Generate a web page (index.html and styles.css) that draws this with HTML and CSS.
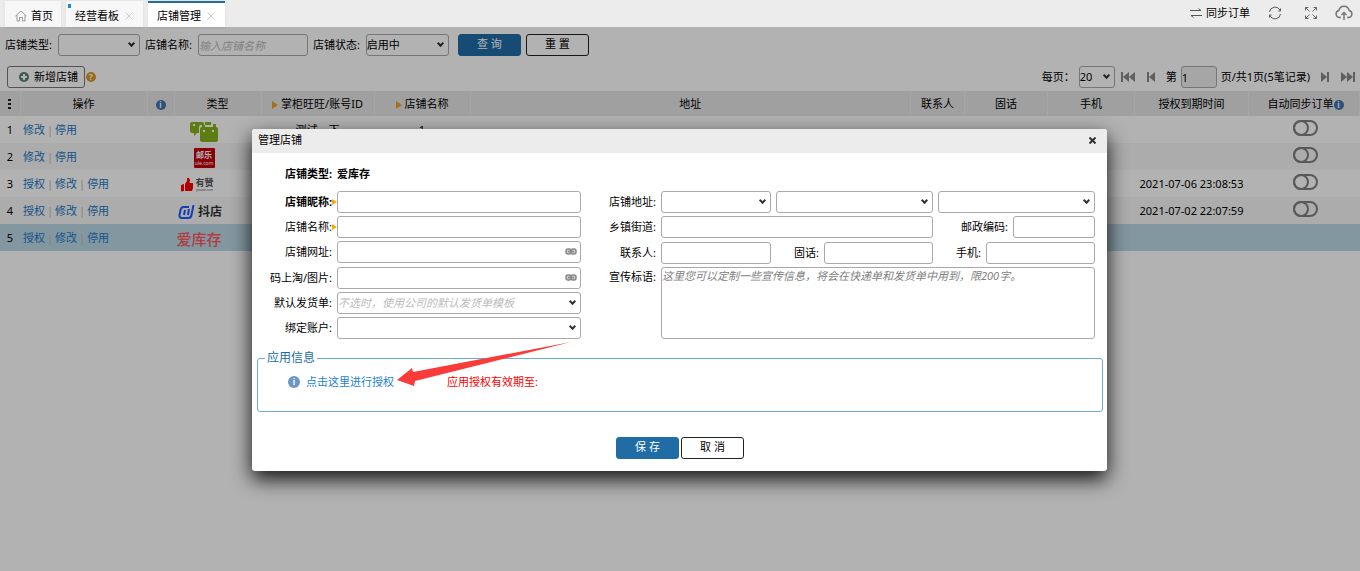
FILE: index.html
```html
<!DOCTYPE html>
<html lang="zh-CN">
<head>
<meta charset="utf-8">
<title>店铺管理</title>
<link rel="stylesheet" href="styles.css">
</head>
<body>
<header class="topbar">
  <nav class="tabs">
    <a class="tab" href="#home"><svg width="12" height="12" viewBox="0 0 12 12" fill="none" stroke="#999"><path d="M.5 6 6 1l5.500 5M2 5v6h2.500V7.500h3V11H10V5"/></svg><span>首页</span></a>
    <a class="tab tab-marked" href="#board"><span>经营看板</span><svg width="8" height="8" viewBox="0 0 8 8" stroke="#ccc"><path d="m.5.5 7 7m0-7-7 7"/></svg></a>
    <a class="tab tab-active" href="#shops"><span>店铺管理</span><svg width="8" height="8" viewBox="0 0 8 8" stroke="#ccc"><path d="m.5.5 7 7m0-7-7 7"/></svg></a>
  </nav>
  <div class="tools">
    <button class="tool" type="button"><svg width="12" height="10" viewBox="0 0 12 10" fill="none" stroke="#555"><path d="M0 2.500h11M8.500.5l2.500 2M12 7.500H1M3.500 9.500 1 7.500"/></svg><span>同步订单</span></button>
    <button class="tool" type="button" aria-label="刷新"><svg width="14" height="14" viewBox="0 0 14 14" fill="none" stroke="#555"><path d="M1.500 6A5.500 5.500 0 0 1 12 4.500M12.500 8A5.500 5.500 0 0 1 2 9.500M12.500 2.500v2.500h-2M1.500 11.500V9h2"/></svg></button>
    <button class="tool" type="button" aria-label="全屏"><svg width="12" height="12" viewBox="0 0 12 12" fill="none" stroke="#666"><path d="M.5 3.500v-3h3M.5.5 4.500 4.500M8.500.5h3v3M11.500.5l-4 4M.5 8.500v3h3M.5 11.500l4-4M8.500 11.500h3v-3M11.500 11.500l-4-4"/></svg></button>
    <button class="tool" type="button" aria-label="上传"><svg width="18" height="16" viewBox="0 0 18 16" fill="none" stroke="#777" stroke-width="1.500"><path d="M6 12.500H4.500a3.600 3.600 0 0 1-.6-7.100 5.200 5.200 0 0 1 10.200 0 3.600 3.600 0 0 1-.6 7.100H12M9 15V8M6.500 10 9 7.500 11.500 10"/></svg></button>
  </div>
</header>

<main class="page">
  <form class="search">
    <label for="s-type">店铺类型:</label>
    <span class="combo combo-type"><select id="s-type"><option></option></select></span>
    <label for="s-name">店铺名称:</label>
    <input class="field search-name" id="s-name" placeholder="输入店铺名称">
    <label for="s-state">店铺状态:</label>
    <span class="combo combo-state"><select id="s-state"><option>启用中</option></select></span>
    <div class="search-actions">
      <button class="btn btn-primary" type="button">查 询</button>
      <button class="btn" type="button">重 置</button>
    </div>
  </form>

  <div class="toolbar">
    <div class="toolbar-left">
      <button class="add" type="button"><svg width="10" height="10" viewBox="0 0 10 10"><circle cx="5" cy="5" r="5" fill="#558570"/><path d="M5 2v6M2 5h6" stroke="#fff" stroke-width="2"/></svg>新增店铺</button>
      <span class="dot dot-help">?</span>
    </div>
    <div class="pager">
      <label class="pager-size" for="p-size">每页：</label>
      <span class="combo combo-size"><select id="p-size"><option>20</option></select></span>
      <button class="pg" type="button" aria-label="首页"><svg width="14" height="12" viewBox="0 0 14 12"><path d="M0 1h2v10H0zM8 1v10L2 6zM14 1v10L8 6z"/></svg></button>
      <button class="pg pg-prev" type="button" aria-label="上一页"><svg width="8" height="12" viewBox="0 0 8 12"><path d="M0 1h2v10H0zM8 1v10L2 6z"/></svg></button>
      <label for="p-no">第</label>
      <input class="field page-no" id="p-no" value="1">
      <span>页/共1页(5笔记录)</span>
      <button class="pg pg-next" type="button" aria-label="下一页"><svg width="8" height="12" viewBox="0 0 8 12"><path d="M6 1h2v10H6zM0 1v10l6-5z"/></svg></button>
      <button class="pg pg-last" type="button" aria-label="末页"><svg width="14" height="12" viewBox="0 0 14 12"><path d="M12 1h2v10h-2zM0 1v10l6-5zM6 1v10l6-5z"/></svg></button>
    </div>
  </div>

  <table class="grid">
    <colgroup><col class="c-no"><col class="c-op"><col class="c-info"><col class="c-kind"><col class="c-id"><col class="c-name"><col><col class="c-person"><col class="c-tel"><col class="c-mobile"><col class="c-date"><col class="c-sync"></colgroup>
    <thead>
      <tr>
        <th><svg width="3" height="10" viewBox="0 0 3 10" fill="#222"><path d="M0 0h3v2H0zM0 4h3v2H0zM0 8h3v2H0z"/></svg></th>
        <th>操作</th>
        <th><span class="dot dot-info">i</span></th>
        <th>类型</th>
        <th><span class="mark"></span>掌柜旺旺/账号ID</th>
        <th><span class="mark"></span>店铺名称</th>
        <th>地址</th><th>联系人</th><th>固话</th><th>手机</th><th>授权到期时间</th>
        <th class="sync">自动同步订单<span class="dot dot-info">i</span></th>
      </tr>
    </thead>
    <tbody>
      <tr>
        <td>1</td><td class="ops"><a href="#edit">修改</a><i>|</i><a href="#stop">停用</a></td><td></td>
        <td><span class="logo"><svg width="28" height="21" viewBox="0 0 28 21"><path fill="#86b41c" d="M2 1h10q2 0 2 2v1h-3q-2 0-2 2v6H7l-3 3v-3H2q-2 0-2-2V3q0-2 2-2zM15 1h6v3h-6z"/><rect x="10" y="6" width="18" height="15" rx="2" fill="#86b41c"/><path d="M12 6V4h3v2M23 6V3h3v3" fill="#86b41c"/><path d="M4 3v2M14 9v2M23 9v2" stroke="#fff" stroke-width="2"/></svg></span></td>
        <td>测试一下</td><td>1</td><td></td><td></td><td></td><td></td><td></td>
        <td class="sync"><input class="switch" type="checkbox" aria-label="自动同步订单 1"></td>
      </tr>
      <tr>
        <td>2</td><td class="ops"><a href="#edit">修改</a><i>|</i><a href="#stop">停用</a></td><td></td>
        <td><span class="logo"><span class="logo-ule"><b>邮乐</b><small>ule.com</small></span></span></td>
        <td></td><td></td><td></td><td></td><td></td><td></td><td></td>
        <td class="sync"><input class="switch" type="checkbox" aria-label="自动同步订单 2"></td>
      </tr>
      <tr>
        <td>3</td><td class="ops"><a href="#auth">授权</a><i>|</i><a href="#edit">修改</a><i>|</i><a href="#stop">停用</a></td><td></td>
        <td><span class="logo logo-youzan"><svg width="12" height="14" viewBox="0 0 12 14" fill="#f00"><path d="M0 7l3-1v7l-3 .500zM4 6l2-3V0h2l1 2-.5 3H12v5l-1 3H4z"/></svg><span class="youzan-text"><b>有赞</b><small>youzan.com</small></span></span></td>
        <td></td><td></td><td></td><td></td><td></td><td></td><td>2021-07-06 23:08:53</td>
        <td class="sync"><input class="switch" type="checkbox" aria-label="自动同步订单 3"></td>
      </tr>
      <tr>
        <td>4</td><td class="ops"><a href="#auth">授权</a><i>|</i><a href="#edit">修改</a><i>|</i><a href="#stop">停用</a></td><td></td>
        <td><span class="logo logo-doudian"><svg width="17" height="15" viewBox="0 0 17 15" fill="none" stroke="#185cff" stroke-width="2"><path d="M11 2H6Q3 2 2.500 5L1.500 10Q1 13 4 13h6q3 0 3.500-3L15.500 0M7 5 6 10M11 4 10 10"/></svg><b>抖店</b></span></td>
        <td></td><td></td><td></td><td></td><td></td><td></td><td>2021-07-02 22:07:59</td>
        <td class="sync"><input class="switch" type="checkbox" aria-label="自动同步订单 4"></td>
      </tr>
      <tr class="selected">
        <td>5</td><td class="ops"><a href="#auth">授权</a><i>|</i><a href="#edit">修改</a><i>|</i><a href="#stop">停用</a></td><td></td>
        <td><span class="logo logo-aikucun">爱库存</span></td>
        <td></td><td></td><td></td><td></td><td></td><td></td><td></td><td></td>
      </tr>
    </tbody>
  </table>

  <div class="overlay">
    <section class="dialog" role="dialog" aria-labelledby="dlg-title">
      <header class="dialog-head"><span id="dlg-title">管理店铺</span><button type="button" class="close" aria-label="关闭"><svg width="7" height="7" viewBox="0 0 7 7" stroke="#333" stroke-width="2"><path d="m.5.5 6 6m0-6-6 6"/></svg></button></header>
      <form class="dialog-body">
        <p class="kind"><span class="lbl">店铺类型:</span><span>爱库存</span></p>
        <div class="columns">
          <div class="left">
            <label class="lbl strong required" for="f-nick">店铺昵称:</label><input class="field" id="f-nick">
            <label class="lbl required" for="f-name">店铺名称:</label><input class="field" id="f-name">
            <label class="lbl" for="f-url">店铺网址:</label><span class="linked"><input class="field" id="f-url"><svg width="12" height="7" viewBox="0 0 12 7" fill="#ccc" stroke="#888" stroke-width="1.500"><rect x="1" y="1" width="5" height="5" rx="2"/><rect x="6" y="1" width="5" height="5" rx="2"/><path d="M3 3.500h6"/></svg></span>
            <label class="lbl" for="f-pic">码上淘/图片:</label><span class="linked"><input class="field" id="f-pic"><svg width="12" height="7" viewBox="0 0 12 7" fill="#ccc" stroke="#888" stroke-width="1.500"><rect x="1" y="1" width="5" height="5" rx="2"/><rect x="6" y="1" width="5" height="5" rx="2"/><path d="M3 3.500h6"/></svg></span>
            <label class="lbl" for="f-tpl">默认发货单:</label><span class="combo"><select class="hint" id="f-tpl"><option>不选时，使用公司的默认发货单模板</option></select></span>
            <label class="lbl" for="f-acc">绑定账户:</label><span class="combo"><select id="f-acc"><option></option></select></span>
          </div>
          <div class="right">
            <label class="lbl" for="f-prov">店铺地址:</label>
            <span class="combo"><select id="f-prov"><option></option></select></span>
            <span class="combo"><select aria-label="城市"><option></option></select></span>
            <span class="combo"><select aria-label="区县"><option></option></select></span>
            <label class="lbl" for="f-street">乡镇街道:</label><input class="field span2" id="f-street">
            <div class="pair pair-zip"><label class="lbl" for="f-zip">邮政编码:</label><input class="field" id="f-zip"></div>
            <label class="lbl" for="f-person">联系人:</label><input class="field" id="f-person">
            <div class="pair"><label class="lbl" for="f-tel">固话:</label><input class="field" id="f-tel"></div>
            <div class="pair"><label class="lbl" for="f-mob">手机:</label><input class="field" id="f-mob"></div>
            <label class="lbl lbl-top" for="f-slogan">宣传标语:</label><textarea class="field span3" id="f-slogan" placeholder="这里您可以定制一些宣传信息，将会在快递单和发货单中用到，限200字。"></textarea>
          </div>
        </div>
        <fieldset class="app">
          <legend>应用信息</legend>
          <div class="app-row">
            <a class="auth" href="#auth"><span class="dot dot-auth">i</span>点击这里进行授权</a>
            <span class="expire">应用授权有效期至:</span>
          </div>
        </fieldset>
        <div class="dialog-actions">
          <button class="btn btn-primary" type="button">保 存</button>
          <button class="btn" type="button">取 消</button>
        </div>
      </form>
      <svg class="arrow" width="174" height="44" viewBox="0 0 174 44"><path fill="#f93b3a" d="M0 38 15 26l1 4L174 0 18 39l-1 5z"/></svg>
    </section>
  </div>
</main>
</body>
</html>
```

FILE: styles.css
```css
*, *::before, *::after { box-sizing: border-box; }
html, body { height: 100%; }
body {
  margin: 0;
  display: flex;
  flex-direction: column;
  font: 11px/16px "Noto Sans", "Noto Sans CJK SC", sans-serif;
  color: #000;
  background: #fff;
}
input, select, textarea, button { font: inherit; color: inherit; margin: 0; }
button { cursor: pointer; }
a { text-decoration: none; }
svg { display: block; flex: none; }

/* Top bar */
.topbar {
  height: 27px;
  flex: none;
  display: flex;
  justify-content: space-between;
  padding: 1px 7px 0 5px;
  background: #ececec;
}
.tabs { display: flex; gap: 5px; }
.tab {
  position: relative;
  display: flex;
  align-items: center;
  gap: 6px;
  padding: 2px 10px 0 9px;
  border-top: 1px solid transparent;
  color: #000;
  background: #f7f7f7;
  box-shadow: 0 0 3px #ddd;
}
.tab:first-child { gap: 4px; padding: 2px 8px 0 10px; }
.tab-active { background: #fff; border-top: 2px solid #206ca5; padding-top: 1px; }
.tab-marked::before {
  content: "";
  position: absolute;
  left: 2px;
  top: 2px;
  width: 3px;
  height: 4px;
  background: #1e88d8;
}
.tools { display: flex; align-items: center; gap: 18px; padding-bottom: 3px; }
.tool {
  display: flex;
  align-items: center;
  gap: 4px;
  padding: 0;
  border: 0;
  background: none;
}
.tool:nth-child(3) { margin-left: 5px; }

/* Shared controls */
.field, .combo select {
  width: 100%;
  height: 22px;
  padding: 0;
  border: 1px solid #a9a9a9;
  border-radius: 3px;
  background: #fff;
  outline: 0;
}
.field::placeholder { color: #bbb; font-style: italic; }
.combo { position: relative; display: block; min-width: 0; height: 22px; }
.combo select { appearance: none; display: block; }
.combo .hint { color: #bbb; font-style: italic; }
.combo::after {
  content: "";
  position: absolute;
  right: 6px;
  top: 7px;
  width: 5px;
  height: 5px;
  border: solid #333;
  border-width: 0 2px 2px 0;
  transform: rotate(45deg);
  pointer-events: none;
}
.btn {
  width: 63px;
  height: 22px;
  padding: 0 0 2px;
  border: 1px solid #222;
  border-radius: 3px;
  background: #fff;
}
.btn-primary { color: #fff; background: #206ca5; border-color: #206ca5; }
.dot {
  display: inline-block;
  width: 10px;
  height: 10px;
  border-radius: 50%;
  color: #fff;
  font: bold 8px/10px "Noto Sans", sans-serif;
  text-align: center;
}
.dot-info { background: #4372b0; }
.dot-help { background: #d89a28; }

/* Page */
.page { position: relative; flex: 1; }
.search {
  display: flex;
  align-items: center;
  gap: 6px;
  padding: 7px 5px 0;
}
.search > .combo, .search-name { margin-right: -1px; }
.combo-type { width: 82px; }
.combo-state { width: 83px; }
.search-name { width: 110px; }
.search-actions { display: flex; gap: 5px; margin-left: 4px; }
.toolbar {
  display: flex;
  justify-content: space-between;
  padding: 10px 5px 3px 7px;
}
.toolbar-left, .pager { display: flex; align-items: center; }
.toolbar-left { gap: 1px; }
.add {
  display: flex;
  align-items: center;
  gap: 5px;
  height: 22px;
  padding: 0 6px 0 11px;
  border: 1px solid #777;
  border-radius: 3px;
  background: #fff;
}
.pager { gap: 4px; }
.combo-size { width: 36px; }
.page-no { width: 36px; background: #eee; }
.pg { padding: 0; border: 0; background: none; fill: #888; margin-left: 2px; }
.pg-prev { margin: 0 7px 0 8px; }
.pg-next { margin-left: 7px; }
.pg-last { margin-left: 8px; }

/* Shop table */
.grid { width: 100%; table-layout: fixed; border-collapse: collapse; text-align: center; }
.grid th { height: 25px; padding: 0; font-weight: normal; background: #e6e6e6; border-right: 1px solid #f0f0f0; white-space: nowrap; }
.grid th > * { margin: 0 auto; vertical-align: middle; }
.grid td { height: 27px; padding: 0; white-space: nowrap; }
.grid tbody tr:nth-child(even) { background: #f7f7f7; }
.grid tbody .selected { background: #bcd8e7; }
.c-no { width: 20px; }
.c-op { width: 127px; }
.c-info { width: 27px; }
.c-kind { width: 87px; }
.c-id { width: 113px; }
.c-name { width: 96px; }
.c-person { width: 54px; }
.c-tel { width: 83px; }
.c-mobile { width: 87px; }
.c-date { width: 114px; }
.c-sync { width: 111px; }
.grid .sync { padding-left: 3px; }
.grid .mark {
  display: inline-block;
  margin-right: 3px;
  border-left: 6px solid #f0a020;
  border-top: 4px solid transparent;
  border-bottom: 4px solid transparent;
}
.grid .ops { text-align: left; padding-left: 3px; }
.ops a { color: #1c78c4; }
.ops i { color: #bbb; font-style: normal; margin: 0 2px; }
.switch {
  appearance: none;
  display: block;
  width: 25px;
  height: 16px;
  margin: 0 auto 3px;
  border: 2px solid #808080;
  border-radius: 8px;
}
.switch::before {
  content: "";
  display: block;
  width: 16px;
  height: 16px;
  margin: -2px 0 0 -2px;
  border: 2px solid #808080;
  border-radius: 50%;
}
.logo { display: flex; align-items: center; justify-content: center; height: 21px; margin-top: 3px; padding-right: 27px; }
.logo-ule {
  display: flex;
  flex-direction: column;
  width: 21px;
  height: 20px;
  padding-top: 2px;
  border-radius: 1px;
  color: #fff;
  background: #c4000a;
}
.logo-ule b { font-size: 8px; line-height: 10px; }
.logo-ule small { font-size: 5px; line-height: 6px; }
.logo-youzan { gap: 2px; padding-right: 40px; }
.youzan-text { display: flex; flex-direction: column; color: #555; }
.youzan-text b { font-size: 9px; line-height: 10px; }
.youzan-text small { font-size: 3px; line-height: 4px; }
.logo-doudian { gap: 3px; padding-right: 35px; color: #333; font-size: 12px; }
.logo-aikucun { padding-right: 37px; color: #ff5560; font-size: 15px; font-weight: 500; }

/* Dialog */
.overlay {
  position: absolute;
  inset: 0;
  padding: 102px 1px 0 0;
  background: rgba(0, 0, 0, .3);
}
.dialog {
  position: relative;
  width: 90%;
  max-width: 855px;
  margin: 0 auto;
  border-radius: 3px;
  background: #fff;
  box-shadow: 0 8px 20px rgba(0, 0, 0, .9);
}
.dialog-head {
  display: flex;
  align-items: center;
  justify-content: space-between;
  height: 24px;
  padding: 0 11px 2px 6px;
  border-radius: 3px 3px 0 0;
  background: #ececec;
}
.close { padding: 0; border: 0; background: none; }
.dialog-body { padding: 13px 4px 12px 5px; }
.kind { display: flex; gap: 5px; margin: 0 0 9px; font-weight: bold; }
.kind .lbl { width: 75px; }
.lbl { text-align: right; white-space: nowrap; }
.strong { font-weight: bold; }
.columns { display: grid; grid-template-columns: 324fr 514fr; padding-right: 8px; }
.left, .right {
  display: grid;
  align-items: center;
  align-content: space-between;
  column-gap: 5px;
  min-height: 148px;
}
.left { grid-template-columns: 75px 1fr; }
.right { grid-template-columns: 75px 110fr 157fr 157fr; grid-template-rows: repeat(3, 22px) 72px; }
.span2 { grid-column: span 2; }
.span3 { grid-column: span 3; }
.lbl-top { align-self: start; padding-top: 2px; }
.required { position: relative; }
.required::after {
  content: "";
  position: absolute;
  right: -5px;
  top: 5px;
  border-left: 5px solid #ffa500;
  border-top: 3px solid transparent;
  border-bottom: 3px solid transparent;
}
.linked { position: relative; display: block; }
.linked .field { display: block; }
.linked svg { position: absolute; right: 4px; top: 7px; }
.pair { display: grid; grid-template-columns: 43px 1fr; gap: 5px; align-items: center; }
.pair-zip { grid-template-columns: 70px 1fr; }
textarea.field { display: block; height: 72px; resize: none; line-height: 15px; }
textarea.field::placeholder { color: #808080; }
.app {
  height: 62px;
  margin: 11px 0 25px;
  padding: 0 0 0 30px;
  border: 1px solid #6cabd6;
  border-radius: 3px;
}
.app legend { margin-left: -23px; padding: 0 2px; font-size: 12px; color: #1a6ca6; }
.app-row { display: flex; align-items: center; gap: 53px; padding-top: 8px; }
.auth { display: flex; align-items: center; gap: 6px; color: #1c7fd6; }
.dot-auth { width: 12px; height: 12px; line-height: 12px; background: #6c95c8; }
.expire { color: #f00; }
.dialog-actions { display: flex; justify-content: center; gap: 2px; }
.arrow { position: absolute; left: 145px; top: 213px; pointer-events: none; }
```
